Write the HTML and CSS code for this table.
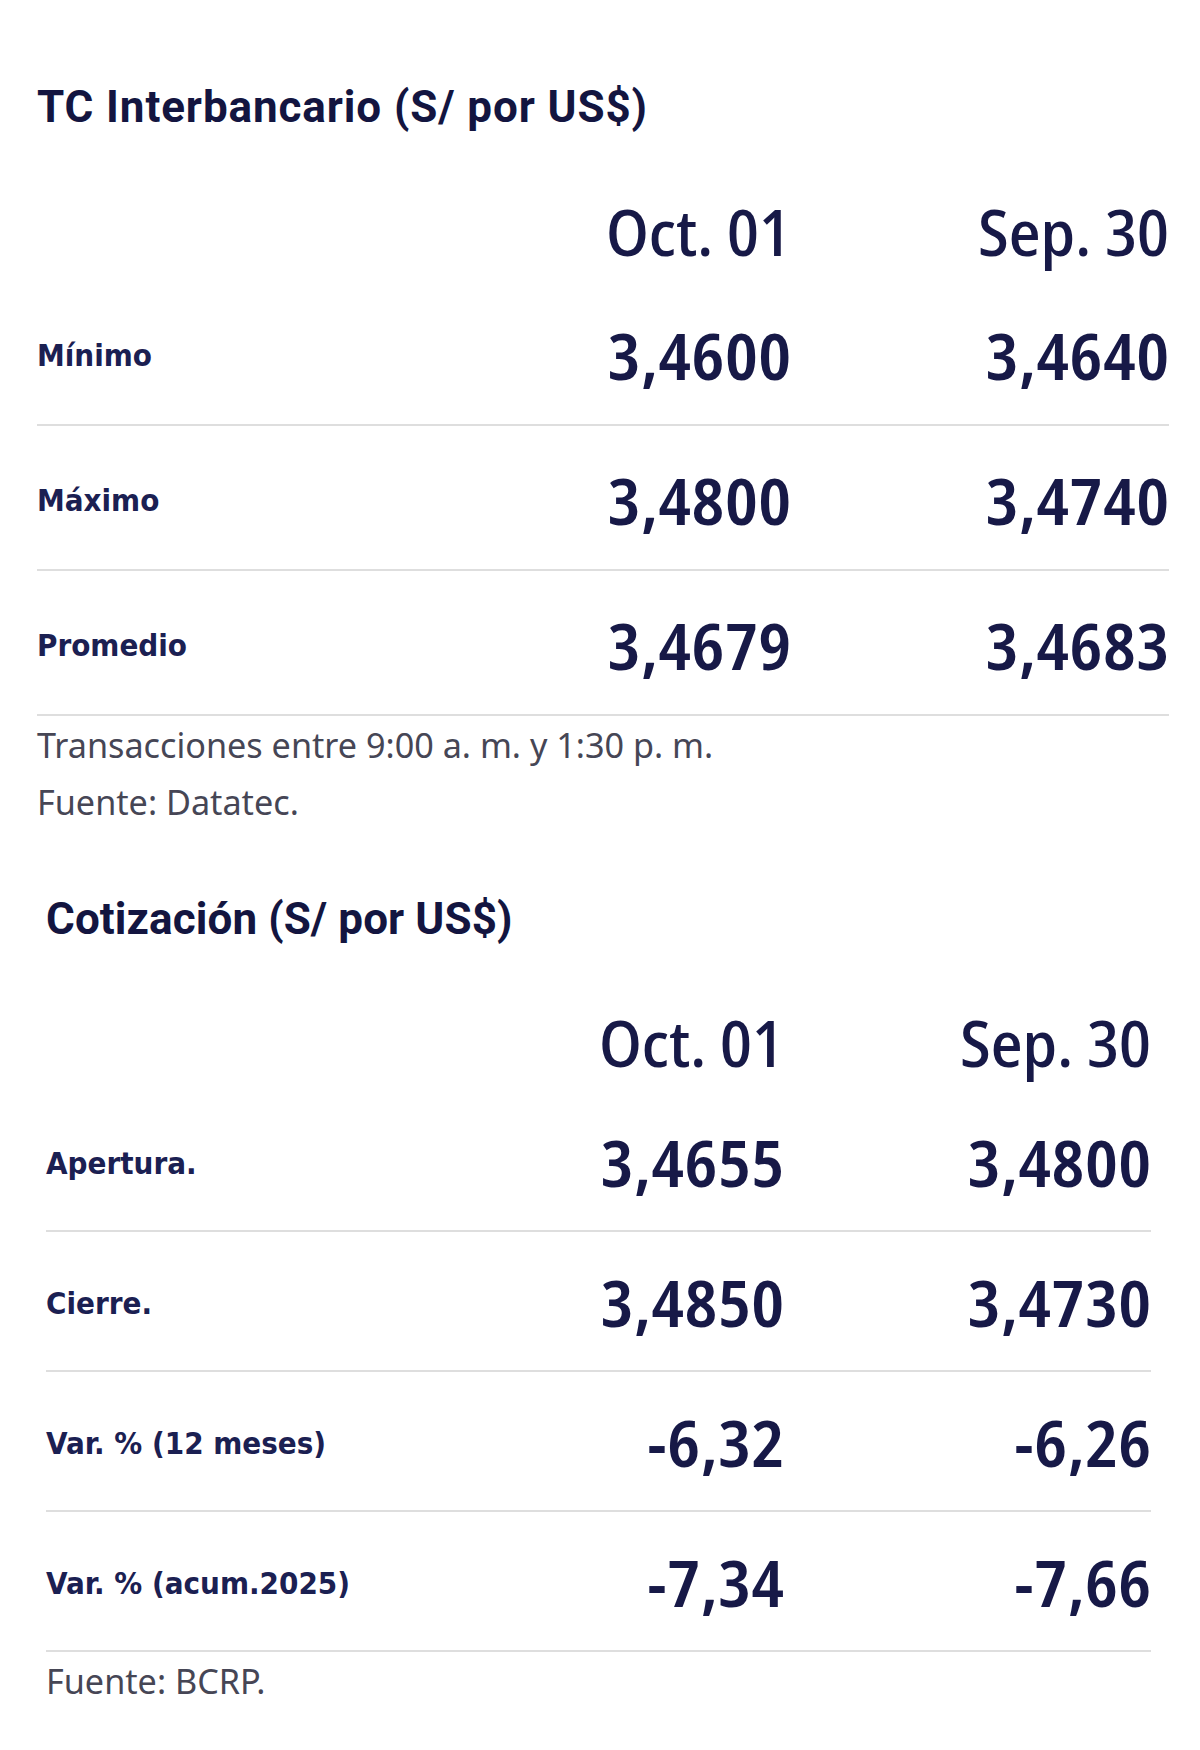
FILE: index.html
```html
<!DOCTYPE html>
<html lang="es">
<head>
<meta charset="utf-8">
<title>Tipo de cambio</title>
<link rel="stylesheet" href="styles.css">
</head>
<body>
  <section class="block block-inter">
    <h2 class="title">TC Interbancario (S/ por US$)</h2>
    <div class="table">
      <div class="row head">
        <span></span>
        <span class="date">Oct. 01</span>
        <span class="date">Sep. 30</span>
      </div>
      <div class="row">
        <span class="label">Mínimo</span>
        <span class="num">3,4600</span>
        <span class="num">3,4640</span>
      </div>
      <div class="row">
        <span class="label">Máximo</span>
        <span class="num">3,4800</span>
        <span class="num">3,4740</span>
      </div>
      <div class="row">
        <span class="label">Promedio</span>
        <span class="num">3,4679</span>
        <span class="num">3,4683</span>
      </div>
    </div>
    <p class="note">Transacciones entre 9:00 a. m. y 1:30 p. m.</p>
    <p class="note">Fuente: Datatec.</p>
  </section>

  <section class="block block-cot">
    <h2 class="title">Cotización (S/ por US$)</h2>
    <div class="table">
      <div class="row head">
        <span></span>
        <span class="date">Oct. 01</span>
        <span class="date">Sep. 30</span>
      </div>
      <div class="row">
        <span class="label">Apertura.</span>
        <span class="num">3,4655</span>
        <span class="num">3,4800</span>
      </div>
      <div class="row">
        <span class="label">Cierre.</span>
        <span class="num">3,4850</span>
        <span class="num">3,4730</span>
      </div>
      <div class="row">
        <span class="label">Var. % (12 meses)</span>
        <span class="num">-6,32</span>
        <span class="num">-6,26</span>
      </div>
      <div class="row">
        <span class="label">Var. % (acum.2025)</span>
        <span class="num">-7,34</span>
        <span class="num">-7,66</span>
      </div>
    </div>
    <p class="note">Fuente: BCRP.</p>
  </section>
</body>
</html>
```

FILE: styles.css
```css
* {
  box-sizing: border-box;
}

body {
  margin: 0;
  padding: 77px 0 0 0;
  background: #ffffff;
  color: #161846;
  font-family: "Roboto", "Liberation Sans", sans-serif;
}

.block {
  display: flex;
  flex-direction: column;
}

.block-inter {
  margin-left: 37px;
  width: 1132px;
  --col3: 378px;
  --row-h: 145px;
  --row-pad: 6px;
}

.block-cot {
  margin-left: 46px;
  width: 1105px;
  margin-top: 59px;
  --col3: 367px;
  --row-h: 140px;
  --row-pad: 4px;
}

.title {
  margin: 0 0 52px 0;
  font-family: "Roboto", "Liberation Sans", sans-serif;
  font-weight: 700;
  font-size: 44px;
  line-height: 60px;
  letter-spacing: 0.6px;
  color: #131540;
}

.block-inter .title {
  margin-bottom: 53px;
  letter-spacing: 0.9px;
}

.block-cot .title {
  letter-spacing: 0.1px;
}

.table {
  display: flex;
  flex-direction: column;
}

.row {
  display: grid;
  grid-template-columns: 1fr 300px var(--col3);
  align-items: center;
  height: var(--row-h);
  padding-top: var(--row-pad);
  border-bottom: 2px solid #dedede;
}

.row.head {
  height: 91px;
  padding-top: 0;
  padding-bottom: 8px;
  border-bottom: none;
}

.date {
  text-align: right;
  font-family: "Noto Sans Display", "Noto Sans", sans-serif;
  font-stretch: semi-condensed;
  font-weight: 500;
  font-size: 64px;
  line-height: 1;
  color: #171947;
}

.num {
  text-align: right;
  font-family: "Noto Sans Display", "Noto Sans", sans-serif;
  font-stretch: semi-condensed;
  font-weight: 600;
  font-size: 64px;
  line-height: 1;
  letter-spacing: 1px;
  margin-right: -1px;
  color: #171947;
}

.label {
  font-family: "DejaVu Sans Condensed", "DejaVu Sans", sans-serif;
  font-weight: 700;
  font-size: 31px;
  line-height: 1;
  color: #1b2052;
}

.note {
  margin: 0;
  font-family: "Noto Sans", "Liberation Sans", sans-serif;
  font-stretch: semi-condensed;
  font-size: 34.2px;
  line-height: 57px;
  color: #464655;
}
```
